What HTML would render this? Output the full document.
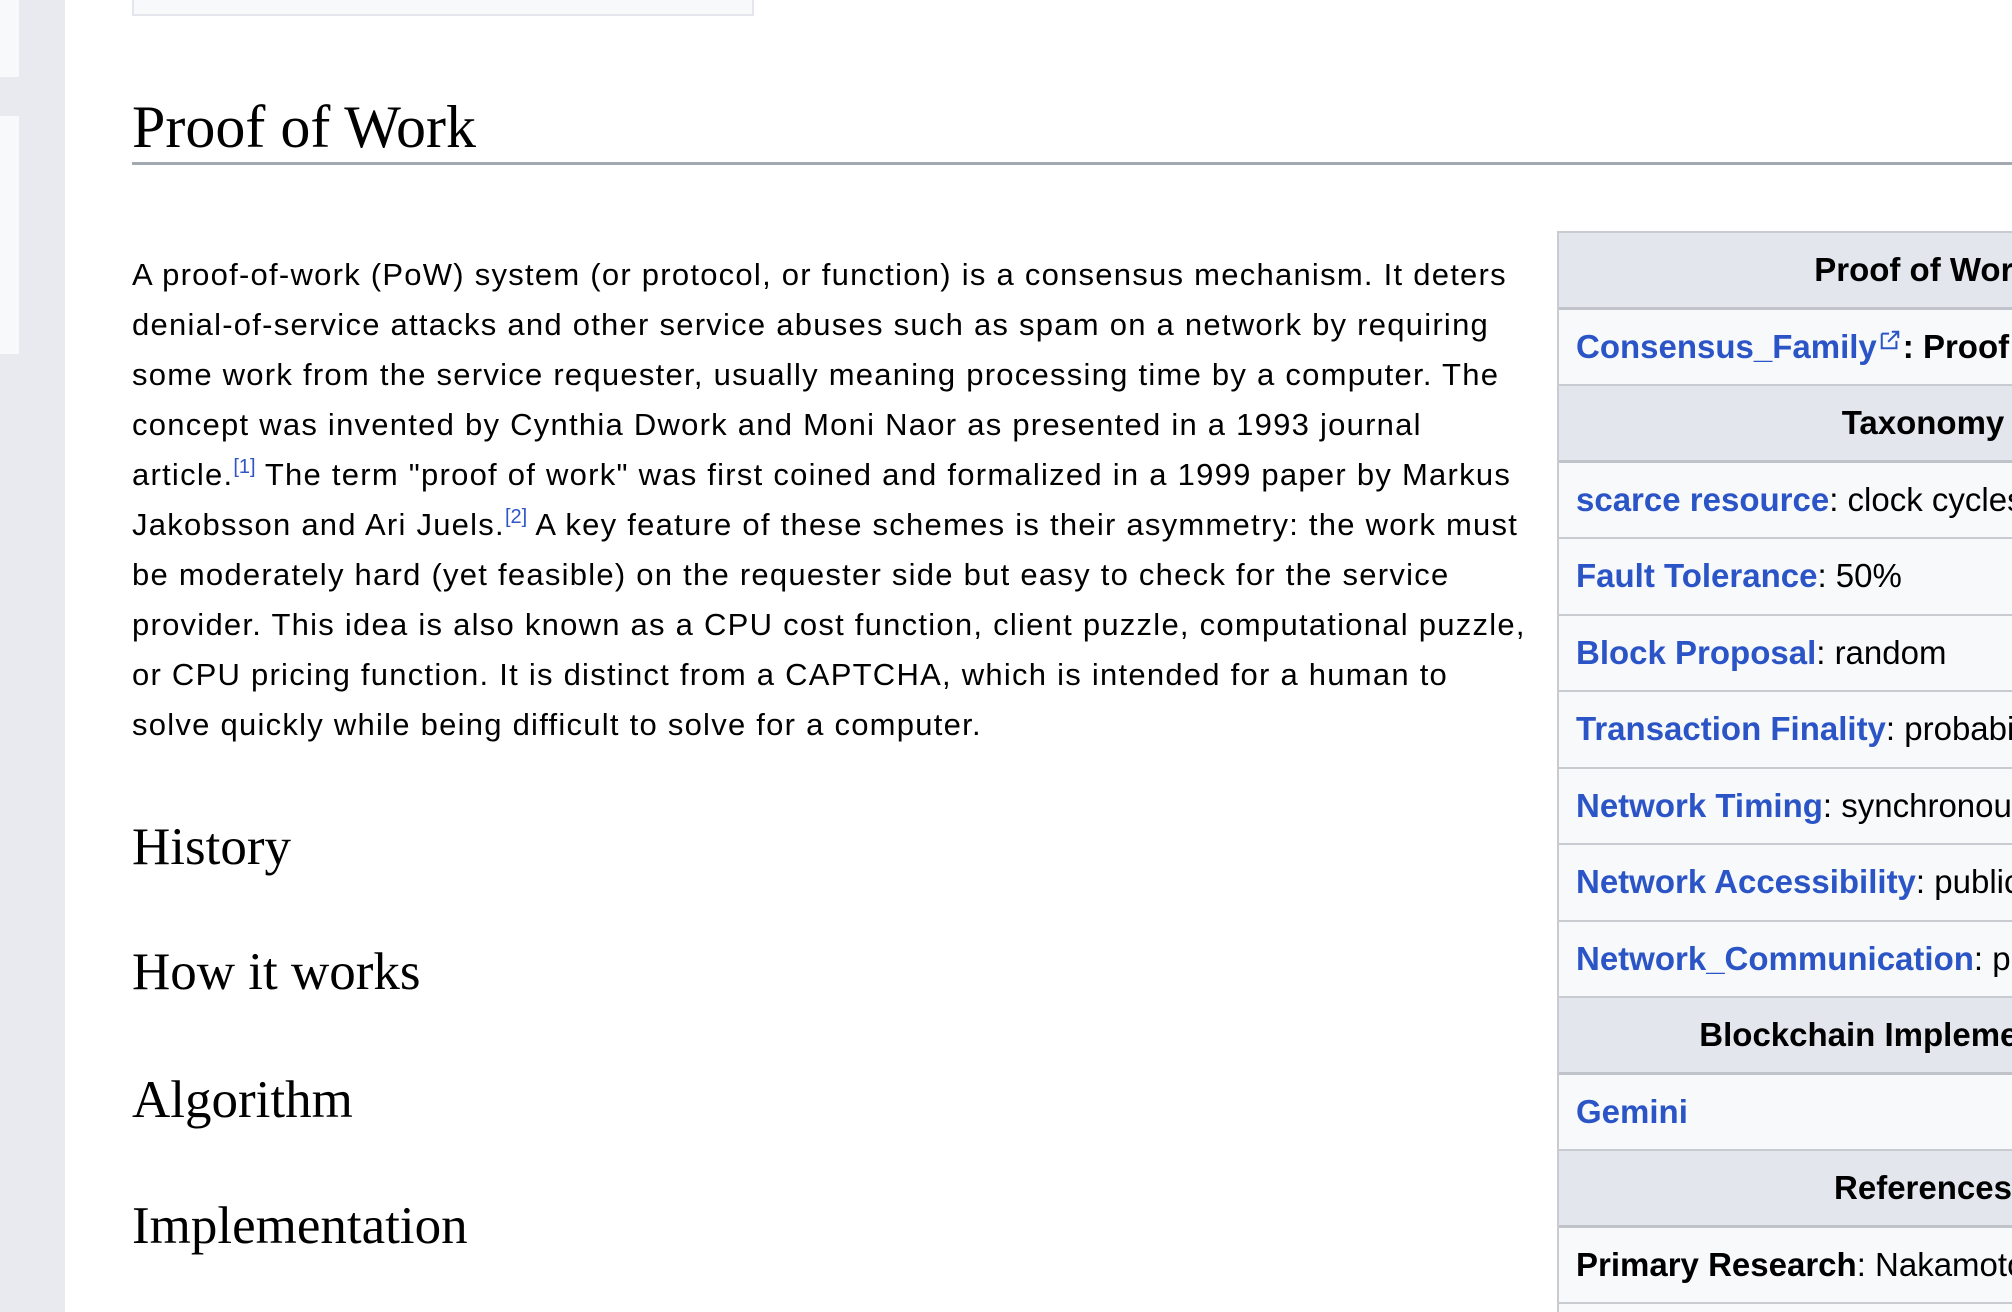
<!DOCTYPE html>
<html><head><meta charset="utf-8"><style>
html,body{margin:0;padding:0;width:2012px;height:1312px;overflow:hidden;}
body{position:relative;background:#fff;font-family:"Liberation Sans",Arial,sans-serif;color:#202122;}
.side{position:absolute;left:0;top:0;width:65px;height:1312px;background:#e8eaf0;}
.p1{position:absolute;left:0;top:0;width:19px;height:77px;background:#f8f9fa;}
.p2{position:absolute;left:0;top:116px;width:19px;height:238px;background:#f8f9fa;}
.topbox{position:absolute;left:132px;top:-4px;width:618px;height:18px;background:#f8f9fa;border:2px solid #e3e6ed;border-top:none;}
.title{position:absolute;left:132px;top:92px;font-family:"Liberation Serif",serif;font-size:60px;line-height:70px;color:#000;white-space:nowrap;}
.rule{position:absolute;left:132px;top:162px;right:0;height:3px;background:#a2a9b1;}
.body{position:absolute;left:132px;top:250px;font-size:31px;letter-spacing:1.25px;line-height:50px;color:#000;white-space:nowrap;}
sup{font-size:20px;letter-spacing:0;color:#3056c5;vertical-align:0;position:relative;top:-12px;line-height:0;}
.h{position:absolute;left:132px;font-family:"Liberation Serif",serif;font-size:53px;line-height:60px;color:#000;white-space:nowrap;}
.ib{position:absolute;left:1557px;top:231px;width:455px;height:1081px;overflow:hidden;border-left:2px solid #c8ccd1;}
.ibi{width:728px;}
.r{height:74.5px;border-bottom:2px solid #c8ccd1;background:#f8f9fa;display:flex;align-items:center;padding-left:17px;font-size:33px;color:#000;white-space:nowrap;}
.hd{background:#e3e6ed;justify-content:center;padding-left:0;font-weight:bold;border-bottom:3px solid #c0c4ca;height:73.5px;}
.r:first-child{border-top:2px solid #c8ccd1;}
a{color:#2b55c7;font-weight:bold;text-decoration:none;}
</style></head><body>
<div class="side"><div class="p1"></div><div class="p2"></div></div>
<div class="topbox"></div>
<div class="title">Proof of Work</div>
<div class="rule"></div>
<div class="body">
A proof-of-work (PoW) system (or protocol, or function) is a consensus mechanism. It deters<br>
denial-of-service attacks and other service abuses such as spam on a network by requiring<br>
some work from the service requester, usually meaning processing time by a computer. The<br>
concept was invented by Cynthia Dwork and Moni Naor as presented in a 1993 journal<br>
article.<sup>[1]</sup> The term "proof of work" was first coined and formalized in a 1999 paper by Markus<br>
Jakobsson and Ari Juels.<sup>[2]</sup> A key feature of these schemes is their asymmetry: the work must<br>
be moderately hard (yet feasible) on the requester side but easy to check for the service<br>
provider. This idea is also known as a CPU cost function, client puzzle, computational puzzle,<br>
or CPU pricing function. It is distinct from a CAPTCHA, which is intended for a human to<br>
solve quickly while being difficult to solve for a computer.
</div>
<div class="h" style="top:817px">History</div>
<div class="h" style="top:942px">How it works</div>
<div class="h" style="top:1070px">Algorithm</div>
<div class="h" style="top:1196px">Implementation</div>
<div class="ib"><div class="ibi">
<div class="r hd">Proof of Work</div>
<div class="r"><a>Consensus_Family</a><svg width="22" height="22" viewBox="0 0 12 12" style="margin:-14px 2px 0 2px"><path d="M1.5 2.5h4M1.5 2.5v8h8v-4" fill="none" stroke="#2b55c7" stroke-width="1.1"/><path d="M5 7L10.5 1.5M7 1.5h3.5v3.5" fill="none" stroke="#2b55c7" stroke-width="1.1"/></svg><b>: Proof of Work</b></div>
<div class="r hd">Taxonomy</div>
<div class="r"><a>scarce resource</a>: clock cycles</div>
<div class="r"><a>Fault Tolerance</a>: 50%</div>
<div class="r"><a>Block Proposal</a>: random</div>
<div class="r"><a>Transaction Finality</a>: probabilistic</div>
<div class="r"><a>Network Timing</a>: synchronous</div>
<div class="r"><a>Network Accessibility</a>: public</div>
<div class="r"><a>Network_Communication</a>: peer-to-peer</div>
<div class="r hd">Blockchain Implementations</div>
<div class="r"><a>Gemini</a></div>
<div class="r hd">References</div>
<div class="r"><b>Primary Research</b>: Nakamoto (2008)</div>
<div class="r"></div>
</div></div>
</body></html>
